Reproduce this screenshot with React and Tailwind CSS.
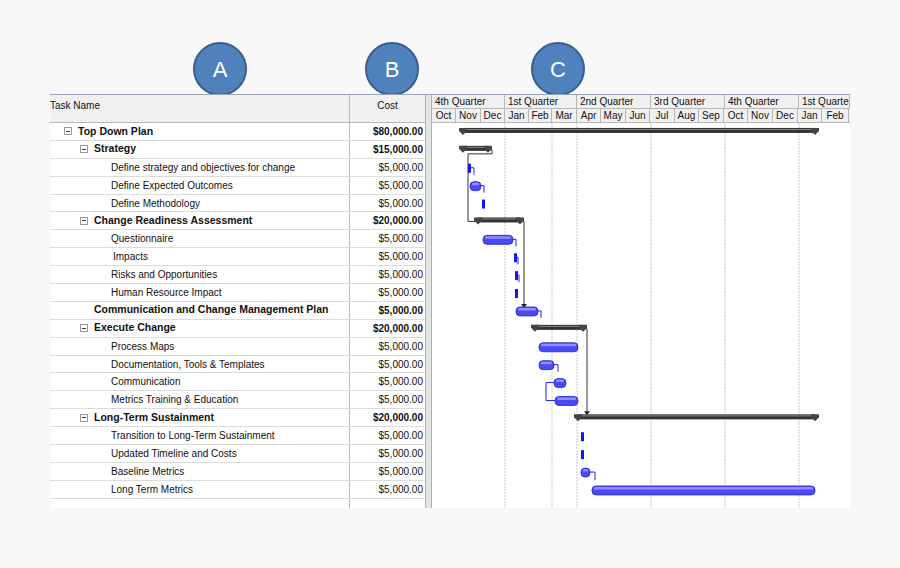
const rows = [
  { name: "Top Down Plan", cost: "$80,000.00", lvl: 0, bold: true, toggle: true },
  { name: "Strategy", cost: "$15,000.00", lvl: 1, bold: true, toggle: true },
  { name: "Define strategy and objectives for change", cost: "$5,000.00", lvl: 2 },
  { name: "Define Expected Outcomes", cost: "$5,000.00", lvl: 2 },
  { name: "Define Methodology", cost: "$5,000.00", lvl: 2 },
  { name: "Change Readiness Assessment", cost: "$20,000.00", lvl: 1, bold: true, toggle: true },
  { name: "Questionnaire", cost: "$5,000.00", lvl: 2 },
  { name: "Impacts", cost: "$5,000.00", lvl: 2, extra: true },
  { name: "Risks and Opportunities", cost: "$5,000.00", lvl: 2 },
  { name: "Human Resource Impact", cost: "$5,000.00", lvl: 2 },
  { name: "Communication and Change Management Plan", cost: "$5,000.00", lvl: 1, bold: true },
  { name: "Execute Change", cost: "$20,000.00", lvl: 1, bold: true, toggle: true },
  { name: "Process Maps", cost: "$5,000.00", lvl: 2 },
  { name: "Documentation, Tools & Templates", cost: "$5,000.00", lvl: 2 },
  { name: "Communication", cost: "$5,000.00", lvl: 2 },
  { name: "Metrics Training & Education", cost: "$5,000.00", lvl: 2 },
  { name: "Long-Term Sustainment", cost: "$20,000.00", lvl: 1, bold: true, toggle: true },
  { name: "Transition to Long-Term Sustainment", cost: "$5,000.00", lvl: 2 },
  { name: "Updated Timeline and Costs", cost: "$5,000.00", lvl: 2 },
  { name: "Baseline Metrics", cost: "$5,000.00", lvl: 2 },
  { name: "Long Term Metrics", cost: "$5,000.00", lvl: 2 },
];

const quarters = [
  ["4th Quarter", 73], ["1st Quarter", 72], ["2nd Quarter", 74], ["3rd Quarter", 74], ["4th Quarter", 74], ["1st Quarte", 51],
];
const months = ["Oct","Nov","Dec","Jan","Feb","Mar","Apr","May","Jun","Jul","Aug","Sep","Oct","Nov","Dec","Jan","Feb"];
const monthW = [24,25,24,24,23,25,24,25,24,25,24,25,24,25,25,24,27];

const RH = 17.9;
const X0 = 432;
const cy = (i) => i * RH + RH / 2;

// summary bars (black) and task bars (blue), in page x coords
const summaries = [[0, 463, 815], [1, 463, 488], [5, 478, 520], [11, 535, 583], [16, 578, 815]];
const tasks = [[2, 468, 471], [3, 470, 481], [4, 482, 485], [6, 483, 513], [7, 514, 517], [8, 515, 518], [9, 515, 518],
  [10, 516, 538], [12, 539, 578], [13, 539, 554], [14, 554, 566], [15, 555, 578], [17, 581, 583], [18, 581, 583], [19, 581, 590], [20, 592, 815]];

function Circle({ letter }) {
  return (
    <div className="w-[54px] h-[54px] rounded-full bg-[#4f81bd] border-2 border-[#385d8a] flex items-center justify-center text-white text-[22px]">
      {letter}
    </div>
  );
}

function Chart() {
  const H = rows.length * RH + 11;
  return (
    <svg width="418" height={H} className="block">
      {[505, 552, 577, 651, 725, 799].map((x) => (
        <line key={x} x1={x - X0} y1="0" x2={x - X0} y2={H} stroke="#c8c8c8" strokeDasharray="2 1" />
      ))}
      {/* links */}
      <g fill="none" stroke="#333" strokeWidth="1">
        <path d={`M${488 - X0} ${cy(1)} h4 v4 h-24 v${cy(5) - cy(1) - 4} h8`} />
        <path d={`M${520 - X0} ${cy(5)} h4 v${cy(10) - cy(5) - 6}`} />
        <path d={`M${583 - X0} ${cy(11)} h4 v${cy(16) - cy(11) - 6}`} />
      </g>
      <g fill="#222">
        <path d={`M${521 - X0} ${cy(10) - 7} l3 4 l3 -4z`} />
        <path d={`M${584 - X0} ${cy(16) - 7} l3 4 l3 -4z`} />
      </g>
      <g fill="none" stroke="#2020ee" strokeWidth="1">
        <path d={`M${471 - X0} ${cy(2)} h3 v7`} />
        <path d={`M${481 - X0} ${cy(3)} h3 v7`} />
        <path d={`M${513 - X0} ${cy(6)} h3 v7`} />
        <path d={`M${517 - X0} ${cy(7)} h1 v7`} />
        <path d={`M${518 - X0} ${cy(8)} h1 v7`} />
        <path d={`M${538 - X0} ${cy(10)} h3 v7`} />
        <path d={`M${554 - X0} ${cy(13)} h4 v7`} />
        <path d={`M${554 - X0} ${cy(14)} h-8 v18 h9`} />
        <path d={`M${590 - X0} ${cy(19)} h5 v8`} />
      </g>
      {summaries.map(([r, a, b]) => (
        <g key={r}>
          <rect x={a - X0} y={cy(r) - 4} width={b - a} height="5" fill="#333" />
          <rect x={a - X0} y={cy(r) - 3} width={b - a} height="1" fill="#888" />
          <path d={`M${a - X0 - 4} ${cy(r) - 4} h8 v3 l-4 4 l-4 -4z`} fill="#444" />
          <path d={`M${b - X0 - 4} ${cy(r) - 4} h8 v3 l-4 4 l-4 -4z`} fill="#444" />
        </g>
      ))}
      {tasks.map(([r, a, b]) => {
        const w = b - a;
        return w <= 3 ? (
          <rect key={r} x={a - X0} y={cy(r) - 4} width="3" height="9" fill="#1515ee" />
        ) : (
          <g key={r}>
            <rect x={a - X0} y={cy(r) - 4} width={w} height="9" rx="4" fill="#4a4af0" stroke="#2323d0" strokeWidth="0.8" />
            <rect x={a - X0 + 2} y={cy(r) - 3} width={Math.max(w - 4, 1)} height="2.5" rx="1" fill="#8f8fff" />
          </g>
        );
      })}
    </svg>
  );
}

export default function App() {
  return (
    <div className="w-[900px] h-[568px] bg-[#f8f8f8] relative overflow-hidden" style={{ fontFamily: '"Liberation Sans", Arial, sans-serif' }}>
      <div className="absolute left-[193px] top-[42px]"><Circle letter="A" /></div>
      <div className="absolute left-[365px] top-[42px]"><Circle letter="B" /></div>
      <div className="absolute left-[531px] top-[42px]"><Circle letter="C" /></div>
      <div className="absolute left-[50px] top-[94px] w-[800px] h-[414px] bg-white flex border-t border-[#9aa6b8] text-[10px] text-[#111]">
        <div className="w-[375px] flex flex-col">
          <div className="flex h-[28px] bg-[#f0f0f0] border-b border-[#b8b8b8]">
            <div className="w-[300px] pt-[3px] border-r border-[#b8b8b8]">Task Name</div>
            <div className="w-[75px] pt-[3px] text-center">Cost</div>
          </div>
          {rows.map((r, i) => (
            <div key={i} className="flex h-[17.9px] border-b border-[#dcdcdc] items-center">
              <div className={`w-[300px] h-full flex items-center border-r border-[#b8b8b8] ${r.bold ? "font-bold text-[10.5px]" : ""}`}>
                <div className={r.lvl === 0 ? "w-[16px]" : r.lvl === 1 ? "w-[32px]" : "w-[61px]"} />
                {r.toggle && (
                  <span className="w-[8px] h-[8px] border border-[#999] bg-white flex items-center justify-center mr-[6px] -ml-[2px]">
                    <span className="w-[4px] h-px bg-[#333]" />
                  </span>
                )}
                {r.lvl === 1 && !r.toggle && <span className="w-[12px]" />}
                <span className={r.extra ? "ml-[2px]" : ""}>{r.name}</span>
              </div>
              <div className={`w-[75px] text-right pr-[2px] ${r.bold ? "font-bold" : ""}`}>{r.cost}</div>
            </div>
          ))}
          <div className="flex flex-1">
            <div className="w-[300px] border-r border-[#b8b8b8]" />
          </div>
        </div>
        <div className="w-[7px] bg-[#e4e4e4] border-x border-[#b0b0b0]" />
        <div className="flex-1 flex flex-col overflow-hidden">
          <div className="h-[28px] bg-[#f0f0f0] border-b border-[#b8b8b8]">
            <div className="flex h-[14px] border-b border-[#b8b8b8]">
              {quarters.map(([q, w], i) => (
                <div key={i} className="shrink-0 border-r border-[#b8b8b8] pl-[3px] leading-[14px] whitespace-nowrap overflow-hidden" style={{ width: w }}>{q}</div>
              ))}
            </div>
            <div className="flex h-[13px]">
              {months.map((m, i) => (
                <div key={i} className="shrink-0 border-r border-[#b8b8b8] text-center leading-[13px]" style={{ width: monthW[i] }}>{m}</div>
              ))}
            </div>
          </div>
          <Chart />
        </div>
      </div>
    </div>
  );
}
